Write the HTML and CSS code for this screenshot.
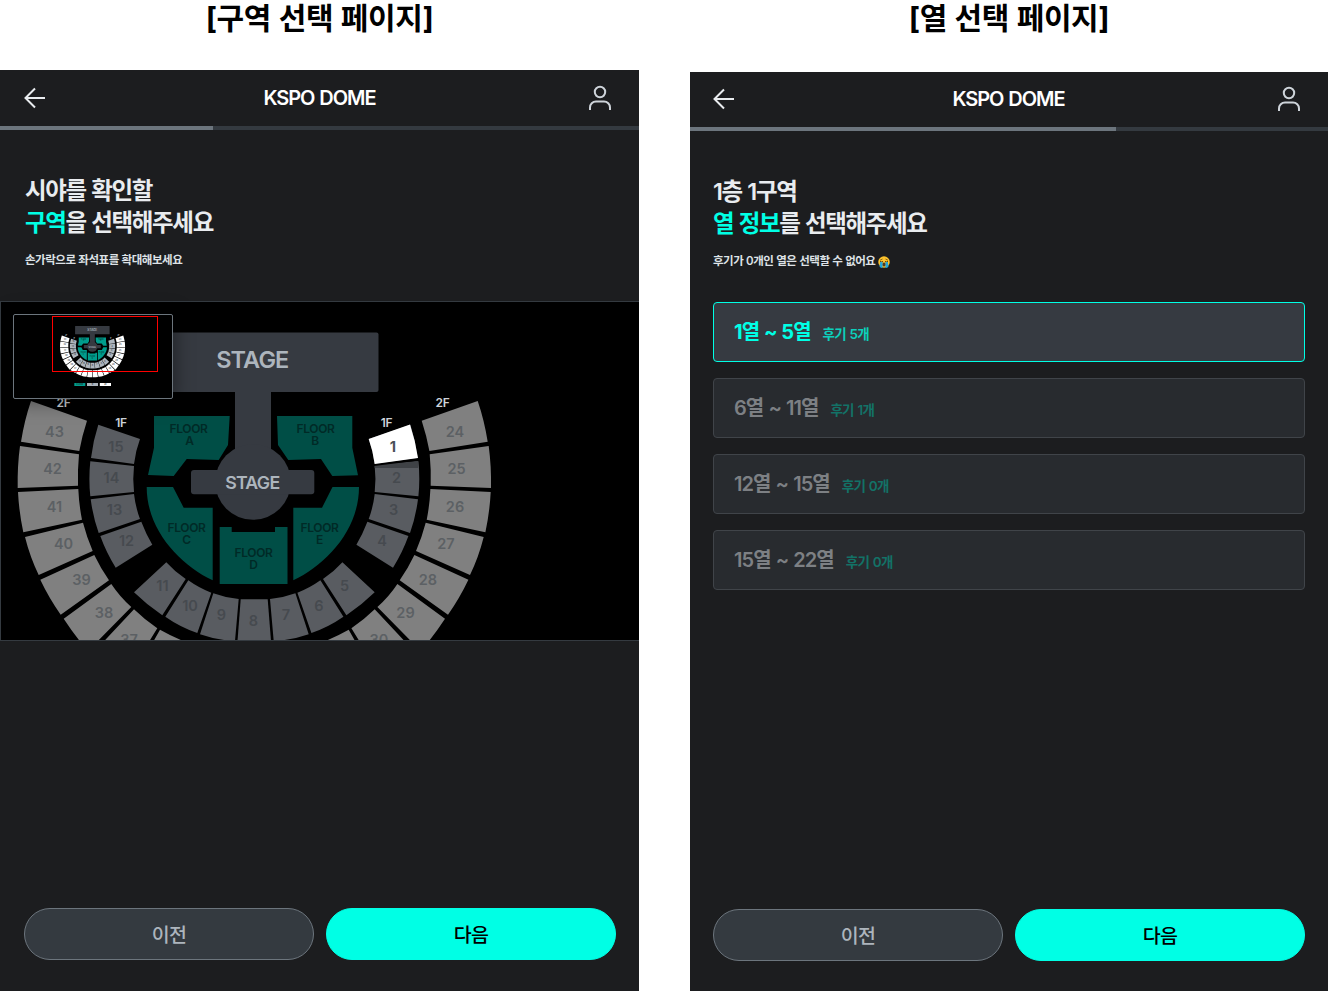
FILE: index.html
```html
<!DOCTYPE html>
<html lang="ko">
<head>
<meta charset="utf-8">
<title>KSPO DOME</title>
<link rel="stylesheet" href="styles.css">
</head>
<body>
<main class="board">
  <section class="column column-zone">
    <h1 class="caption">[구역 선택 페이지]</h1>
    <div class="screen">
      <header class="topbar">
        <svg class="icon-back" viewBox="0 0 22 22"><path d="M11 1.500 1.500 11l9.500 9.500M1.500 11H21"/></svg>
        <span class="venue">KSPO DOME</span>
        <svg class="icon-user" viewBox="0 0 24 26"><circle cx="12" cy="7" r="5.200"/><path d="M2 25v-2.500a6 6 0 0 1 6-6h8a6 6 0 0 1 6 6V25"/></svg>
      </header>
      <div class="progress"><div class="progress-fill one"></div></div>
      <div class="intro">
        <h2 class="question">시야를 확인할<br><em>구역</em>을 선택해주세요</h2>
        <p class="hint">손가락으로 좌석표를 확대해보세요</p>
      </div>
      <div class="map">
        <svg class="map-svg" viewBox="1 302 638 338">
          <defs>
            <g id="left-upper">
              <path d="M31 401 87 420.700Q82 436 79.300 451L21 441.700Q24.500 420 31 401Z"/>
              <path d="M20 446 79 454.300Q77.500 470 78 485.700L17.700 488Q17.300 466 20 446Z"/>
              <path d="M18 492 78.300 489Q79 505 82 519.700L23.300 532.300Q19 512 18 492Z"/>
              <path d="M25 537 83 522.700Q87 538 92.700 551L38.700 575Q30 557 25 537Z"/>
              <path d="M40.300 579.700 94.300 555Q101 569 109 580.300L60.700 614.700Q49 598 40.300 579.700Z"/>
              <path d="M63.700 618.700 111.300 584Q120 597 131.300 607L88 651Q75 636 63.700 618.700Z"/>
              <path d="M134 609.300Q145 620 157.300 628.300L129 674Q110 666 93 653Z"/>
              <path d="M160 629.700Q173 637 188 643L168 692Q150 686 134 676Z"/>
              <path d="M191 644.500Q206 650 220 652L211 702Q191 700 172 694Z"/>
              <path d="M223 652.700Q238 654.500 252.500 654.500V706Q233 706 215 703Z"/>
            </g>
            <g id="left-lower">
              <path d="M98.300 424.700 140 439Q135.500 451 134 464L91 458Q93 441 98.300 424.700Z"/>
              <path d="M90.300 461.300 134 466Q132.500 479 134 492L90.300 496.300Q88.500 479 90.300 461.300Z"/>
              <path d="M90.700 499.300 134 494Q135.500 507 140 519L98.700 533Q93 517 90.700 499.300Z"/>
              <path d="M100.300 536 141.300 521.700Q146 534 152.300 544.700L115.700 567.700Q106 552 100.300 536Z"/>
              <path d="M166.300 562.300Q175 572 185.700 579L162.300 615.300Q147 605 134 592.300Z"/>
              <path d="M188.300 580.300Q199 588 211.300 592.700L197.300 633Q180 627 165.300 616.700Z"/>
              <path d="M213.300 593.300Q226 598 238.700 599L235 641Q216 640 200 634.300Z"/>
            </g>
            <g id="seating">
              <g class="tier-upper">
                <use href="#left-upper"/>
                <use href="#left-upper" transform="matrix(-1 0 0 1 508.700 0)"/>
              </g>
              <g class="tier-lower">
                <use href="#left-lower"/>
                <use href="#left-lower" transform="matrix(-1 0 0 1 508.700 0)"/>
                <path d="M240.700 599.300H267.700L271 641Q254 643 237.500 641Z"/>
              </g>
              <g class="tier-floor">
                <path d="M154 416H229.700L228 445 218.700 460 186.700 459 173.700 476 148 475 154 447.700Z"/>
                <path d="M352.300 416H277L278 445 288.300 460 321 459 332.300 476 358 475.300 352.300 447.700Z"/>
                <path d="M146.700 487H173L183.700 507.700H212.700V580.300C180 565 146.700 530 146.700 487Z"/>
                <path d="M359 487H332.500L322 507.700H293.300V580.300C326 565 359 530 359 487Z"/>
                <path d="M219.700 527H231.700V532H275V527H287.500V584H219.700Z"/>
              </g>
              <g class="stage">
                <rect x="127.500" y="332.500" width="251" height="59.500" rx="2"/>
                <rect x="235" y="390" width="36" height="70"/>
                <circle cx="253" cy="482" r="37.800"/>
                <rect x="191" y="470" width="123.300" height="24.300" rx="3"/>
              </g>
              <g class="stage-name">
                <text class="stage-main" x="252.300" y="368">STAGE</text>
                <text class="stage-center" x="252.300" y="488.800">STAGE</text>
              </g>
              <g class="floor-name">
                <text x="188.500" y="433">FLOOR</text><text x="189.500" y="445">A</text>
                <text x="315.500" y="433">FLOOR</text><text x="315" y="445">B</text>
                <text x="186.500" y="531.500">FLOOR</text><text x="186.500" y="543.500">C</text>
                <text x="319.500" y="531.500">FLOOR</text><text x="319.500" y="543.500">E</text>
                <text x="253.500" y="557">FLOOR</text><text x="253.500" y="569">D</text>
              </g>
              <g class="number-upper">
                <text x="54.500" y="436.500">43</text><text x="52.500" y="474">42</text><text x="54.500" y="511.500">41</text>
                <text x="63.500" y="549">40</text><text x="81.500" y="585">39</text><text x="104" y="618">38</text><text x="129" y="644.500">37</text>
                <text x="455" y="436.500">24</text><text x="456.500" y="474">25</text><text x="455" y="511.500">26</text>
                <text x="446" y="549">27</text><text x="428" y="585">28</text><text x="405.500" y="618">29</text><text x="379" y="644.500">30</text>
              </g>
              <g class="number-lower">
                <text x="116" y="451.500">15</text><text x="111.500" y="483">14</text><text x="114.500" y="514.500">13</text><text x="126.500" y="545.500">12</text>
                <text x="162.500" y="591">11</text><text x="190" y="610.500">10</text><text x="221.500" y="619.500">9</text><text x="253.500" y="625.500">8</text>
                <text x="286" y="619.500">7</text><text x="319" y="610.500">6</text><text x="344.500" y="591">5</text>
                <text x="382" y="545.500">4</text><text x="393.500" y="514.500">3</text><text x="396.500" y="483">2</text>
              </g>
              <g class="tier-name">
                <text x="63.500" y="406.500">2F</text><text x="121" y="427">1F</text>
                <text x="386.500" y="427">1F</text><text x="442.500" y="406.500">2F</text>
              </g>
            </g>
          </defs>
          <use href="#seating" class="dimmed"/>
          <path class="chosen-shade" d="M374.700 464.500 418 461V468H374.700Z"/>
          <path class="chosen-gap" d="M374 464 419 458V460.500L374 466Z"/>
          <path class="chosen" d="M410 424.500 368.700 439Q373 451 374.700 464L418 458Q415.500 441 410 424.500Z"/>
          <text class="chosen-number" x="392.800" y="451.500">1</text>
        </svg>
        <div class="minimap">
          <svg class="mini-svg" viewBox="14 315 158 83">
            <use href="#seating" class="bright" transform="matrix(.1375 0 0 .1375 57.570 280.300)"/>
            <path class="legend-floor" d="M74.300 383h11v3h-11z"/>
            <path class="legend-lower" d="M87 383h11v3H87z"/>
            <path class="legend-upper" d="M99.800 383h11.200v3H99.800z"/>
            <g class="legend-name"><text x="79.800" y="385.300">FLOOR</text><text x="92.500" y="385.300">1F</text><text x="105.400" y="385.300">2F</text></g>
            <rect class="viewport" x="52.500" y="316.500" width="105" height="55"/>
          </svg>
        </div>
      </div>
      <footer class="actions">
        <button class="btn btn-prev">이전</button>
        <button class="btn btn-next">다음</button>
      </footer>
    </div>
  </section>

  <section class="column column-row">
    <h1 class="caption">[열 선택 페이지]</h1>
    <div class="screen">
      <header class="topbar">
        <svg class="icon-back" viewBox="0 0 22 22"><path d="M11 1.500 1.500 11l9.500 9.500M1.500 11H21"/></svg>
        <span class="venue">KSPO DOME</span>
        <svg class="icon-user" viewBox="0 0 24 26"><circle cx="12" cy="7" r="5.200"/><path d="M2 25v-2.500a6 6 0 0 1 6-6h8a6 6 0 0 1 6 6V25"/></svg>
      </header>
      <div class="progress"><div class="progress-fill two"></div></div>
      <div class="intro">
        <h2 class="question">1층 1구역<br><em>열 정보</em>를 선택해주세요</h2>
        <p class="hint">후기가 0개인 열은 선택할 수 없어요
          <svg class="crying" viewBox="0 0 24 24">
            <circle cx="12" cy="12" r="11.500" fill="#fcc32c"/>
            <path d="M4 8.500 9 6M20 8.500 15 6" stroke="#6b4a12" stroke-width="1.500" fill="none"/>
            <path d="M4 11q3 2 6 0M14 11q3 2 6 0" stroke="#4a3410" stroke-width="2" fill="none"/>
            <ellipse cx="12" cy="17" rx="3.500" ry="4" fill="#593a1c"/>
            <path d="M4.500 12h4.500v12q-4 0-6-3zM15 12h4.500L21 21q-2 3-6 3z" fill="#22a7dc"/>
          </svg>
        </p>
      </div>
      <ul class="rows">
        <li class="row selected"><span class="range">1열 ~ 5열</span><span class="reviews">후기 5개</span></li>
        <li class="row"><span class="range">6열 ~ 11열</span><span class="reviews">후기 1개</span></li>
        <li class="row"><span class="range">12열 ~ 15열</span><span class="reviews">후기 0개</span></li>
        <li class="row"><span class="range">15열 ~ 22열</span><span class="reviews">후기 0개</span></li>
      </ul>
      <footer class="actions">
        <button class="btn btn-prev">이전</button>
        <button class="btn btn-next">다음</button>
      </footer>
    </div>
  </section>
</main>
</body>
</html>
```

FILE: styles.css
```css
* { box-sizing: border-box; }

body {
  margin: 0;
  background: #fff;
  font-family: Inter, "Noto Sans CJK KR", sans-serif;
}

h1, h2, p, ul { margin: 0; padding: 0; }

.board {
  display: grid;
  grid-template-columns: 639px 638px;
  column-gap: 51px;
  height: 991px;
}

.column { display: flex; flex-direction: column; height: 991px; }

.caption {
  height: 70px;
  flex: none;
  font: bold 30px/36px Inter, "Noto Sans CJK KR", sans-serif;
  letter-spacing: -0.4px;
  word-spacing: 1px;
  text-align: center;
  color: #000;
}
.column-row .caption { height: 72px; }

.screen {
  flex: 1;
  display: flex;
  flex-direction: column;
  background: #1c1d1f;
}

.topbar {
  height: 56px;
  flex: none;
  display: flex;
  align-items: center;
  justify-content: space-between;
  padding: 0 27px 0 24px;
}
.column-row .topbar { height: 55px; padding: 0 27px 2px 23px; }

.icon-back { width: 22px; height: 22px; fill: none; stroke: #e9ecef; stroke-width: 2; }
.icon-user { width: 24px; height: 26px; fill: none; stroke: #ced4da; stroke-width: 2; }

.venue {
  margin-left: 5px;
  font-size: 20px;
  font-weight: 600;
  letter-spacing: -1.05px;
  word-spacing: 1px;
  color: #fff;
}

.progress { height: 4px; flex: none; background: #343a40; }
.progress-fill { height: 4px; background: #6c757d; }
.progress-fill.one { width: 33.333%; }
.progress-fill.two { width: 66.77%; }

.intro { height: 171px; flex: none; padding: 45px 24px 0 25px; }
.column-row .intro { padding-left: 23px; }

.question {
  font-size: 23.5px;
  line-height: 32px;
  font-weight: 600;
  letter-spacing: -1.35px;
  word-spacing: 0.9px;
  color: #e9ecef;
}
.question em { font-style: normal; color: #00ffe5; }

.hint {
  margin-top: 13px;
  display: flex;
  align-items: center;
  gap: 2px;
  font-size: 11.5px;
  line-height: 17px;
  font-weight: 600;
  letter-spacing: -0.46px;
  word-spacing: 0.3px;
  color: #dee2e6;
}
.crying { width: 12px; height: 12px; }

.map {
  position: relative;
  height: 340px;
  flex: none;
  border: 1px solid #343a40;
  border-right: 0;
  background: #000;
}
.map-svg { display: block; width: 638px; height: 338px; }

.minimap {
  position: absolute;
  left: 12px;
  top: 12px;
  width: 160px;
  height: 85px;
  border: 1px solid #6c757d;
  border-radius: 2px;
  background: #000;
  box-shadow: 0 2px 20px rgba(0, 0, 0, .5);
}
.mini-svg { display: block; width: 158px; height: 83px; }

.dimmed { --upper: #808080; --lower: #595c61; --floor: #004e46; --floor-text: #002a26; --upper-text: #5c6064; --lower-text: #464a4f; }
.bright { --upper: #fff; --lower: #adb5bd; --floor: #009c8c; --floor-text: #003e38; --upper-text: #495057; --lower-text: #343a40; }

.tier-upper { fill: var(--upper); }
.tier-lower { fill: var(--lower); }
.tier-floor { fill: var(--floor); }
.stage { fill: #363a41; }
.map text { text-anchor: middle; font-weight: 600; }
.stage-name { fill: #adb5bd; }
.stage-main { font-size: 23.5px; letter-spacing: -0.9px; }
.stage-center { font-size: 17.8px; letter-spacing: -0.75px; }
.floor-name { fill: var(--floor-text); font-size: 12px; letter-spacing: -0.4px; }
.number-upper { fill: var(--upper-text); font-size: 14.5px; }
.number-lower { fill: var(--lower-text); font-size: 14.5px; }
.tier-name { fill: #ced4da; font-size: 12px; letter-spacing: -0.3px; }
.chosen { fill: #fff; }
.chosen-shade { fill: #3f4246; }
.chosen-gap { fill: #000; }
.map .chosen-number { fill: #495057; font-size: 14.5px; font-weight: 700; }

.legend-floor { fill: #009c8c; }
.legend-lower { fill: #adb5bd; }
.legend-upper { fill: #fff; }
.legend-name { fill: #212529; font-size: 2px; }
.viewport { fill: none; stroke: #f00; stroke-width: 1; }

.rows { list-style: none; padding: 0 23px; display: grid; gap: 16px; }
.row {
  height: 60px;
  display: flex;
  align-items: baseline;
  gap: 12px;
  padding: 14px 20px 0;
  border: 1px solid #404449;
  border-radius: 4px;
  background: #282b2f;
  color: #7d8084;
}
.range { font-size: 20px; line-height: 31px; font-weight: 600; letter-spacing: -0.95px; word-spacing: 1px; }
.reviews { font-size: 13.5px; line-height: 20px; font-weight: 600; letter-spacing: -0.75px; word-spacing: 1px; color: #137267; }
.row.selected { background: #363a41; border-color: #00ffe5; color: #00ffe5; }
.selected .range { font-weight: 700; }
.selected .reviews { color: #0cd0bc; }

.actions {
  margin-top: auto;
  display: grid;
  grid-template-columns: 290px 290px;
  gap: 12px;
  padding: 0 0 31px 24px;
}
.column-row .actions { padding: 0 0 30px 23px; }
.btn {
  height: 52px;
  border-radius: 26px;
  border: 1px solid #6c757d;
  padding: 2px 0 0;
  font: 500 19.5px/48px Inter, "Noto Sans CJK KR", sans-serif;
  letter-spacing: -0.8px;
}
.btn-prev { background: #343a40; color: #adb5bd; }
.btn-next { background: #00ffe5; border-color: #00ffe5; color: #000; }
```
